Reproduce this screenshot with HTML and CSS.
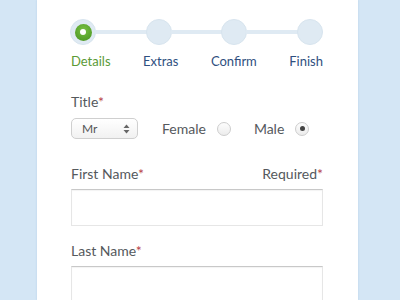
FILE: index.html
```html
<!DOCTYPE html>
<html lang="en">
<head>
    <meta charset="UTF-8">
    <meta name="viewport" content="width=device-width, initial-scale=1.0">
    <title>Registration - Details</title>
    <link rel="stylesheet" href="styles.css">
</head>
<body>
    <div class="form-card">
        <div class="steps">
            <div class="step-dot active"><span class="step-core"></span></div>
            <div class="step-line"></div>
            <div class="step-dot"></div>
            <div class="step-line"></div>
            <div class="step-dot"></div>
            <div class="step-line"></div>
            <div class="step-dot"></div>
        </div>
        <div class="step-labels">
            <span class="step-label current">Details</span>
            <span class="step-label">Extras</span>
            <span class="step-label">Confirm</span>
            <span class="step-label">Finish</span>
        </div>

        <div class="field-label title-label">Title<span class="req">*</span></div>
        <div class="title-row">
            <div class="select-box">
                <span>Mr</span>
                <svg width="7" height="10" viewBox="0 0 7 10">
                    <path d="M3.5 0.5 L6.5 4 L0.5 4 Z" fill="#666"/>
                    <path d="M3.5 9.5 L6.5 6 L0.5 6 Z" fill="#666"/>
                </svg>
            </div>
            <label class="radio-option">Female <span class="radio"></span></label>
            <label class="radio-option">Male <span class="radio checked"></span></label>
        </div>

        <div class="field-label split">
            <span>First Name<span class="req">*</span></span>
            <span>Required<span class="req">*</span></span>
        </div>
        <div class="text-input"></div>

        <div class="field-label last">Last Name<span class="req">*</span></div>
        <div class="text-input"></div>
    </div>
</body>
</html>
```

FILE: styles.css
```css
* {
    margin: 0;
    padding: 0;
    box-sizing: border-box;
}

body {
    font-family: Lato, "Open Sans", sans-serif;
    background: #d4e6f5;
    height: 300px;
    overflow: hidden;
}

.form-card {
    width: 321px;
    height: 300px;
    margin-left: 37px;
    background: #fff;
    padding: 19px 35px 0 34px;
    box-shadow: 0 0 2px rgba(120, 160, 200, 0.3);
}

.steps {
    display: flex;
    align-items: center;
    margin-left: -1px;
}

.step-dot {
    width: 26px;
    height: 26px;
    border-radius: 50%;
    background: #dfeaf3;
    border: 1px solid #d7e4ee;
    display: flex;
    align-items: center;
    justify-content: center;
    flex-shrink: 0;
}

.step-line {
    flex: 1;
    height: 4px;
    background: #dfeaf3;
    margin: 0 -1px;
}

.step-core {
    width: 17px;
    height: 17px;
    border-radius: 50%;
    background: radial-gradient(circle at 50% 35%, #78c043 0%, #55a02a 70%, #4a8f22 100%);
    display: flex;
    align-items: center;
    justify-content: center;
}

.step-core::after {
    content: "";
    width: 6px;
    height: 6px;
    border-radius: 50%;
    background: #fff;
}

.step-labels {
    display: flex;
    justify-content: space-between;
    margin-top: 8px;
    font-size: 13px;
    line-height: 16px;
}

.step-label {
    color: #2f4f80;
}

.step-label.current {
    color: #5b9a36;
}

.field-label {
    font-size: 14px;
    line-height: 16px;
    color: #55595d;
}

.req {
    color: #b9434a;
}

.title-label {
    margin-top: 25px;
}

.title-row {
    display: flex;
    align-items: center;
    margin-top: 8px;
    height: 21px;
}

.select-box {
    width: 67px;
    height: 21px;
    border: 1px solid #cfcfcf;
    border-radius: 5px;
    background: linear-gradient(#ffffff, #f1f1f1);
    display: flex;
    align-items: center;
    justify-content: space-between;
    padding: 0 7px 0 10px;
    font-size: 12px;
    color: #555;
}

.radio-option {
    display: flex;
    align-items: center;
    gap: 11px;
    font-size: 14px;
    color: #55595d;
}

.radio-option:first-of-type {
    margin-left: 24px;
}

.radio-option + .radio-option {
    margin-left: 23px;
}

.radio {
    width: 14px;
    height: 14px;
    border-radius: 50%;
    border: 1px solid #cdcdcd;
    background: linear-gradient(#fdfdfd, #ececec);
    display: flex;
    align-items: center;
    justify-content: center;
}

.radio.checked::after {
    content: "";
    width: 5px;
    height: 5px;
    border-radius: 50%;
    background: #444;
}

.field-label.split {
    display: flex;
    justify-content: space-between;
    margin-top: 27px;
}

.field-label.last {
    margin-top: 17px;
}

.text-input {
    margin-top: 7px;
    height: 37px;
    border: 1px solid #e6e6e6;
    border-top-color: #c8c8c8;
    box-shadow: inset 0 1px 1px rgba(0, 0, 0, 0.05);
    background: #fff;
}
```
